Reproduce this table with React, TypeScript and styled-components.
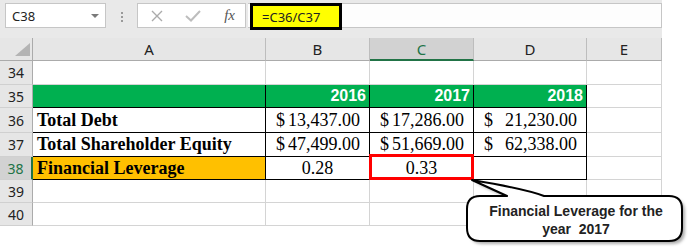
import { Fragment } from "react";
import styled, { createGlobalStyle } from "styled-components";

const GlobalStyle = createGlobalStyle`
  body {
    margin: 0;
    background: #ffffff;
  }
`;

const GRID = "#d4d4d4";
const INK = "#000000";
const EXCEL_GREEN = "#217346";

const Window = styled.div`
  position: relative;
  width: 662px;
  height: 251px;
  font-family: "Noto Sans", "Open Sans", sans-serif;
  color: #222;
`;

const Toolbar = styled.div`
  display: flex;
  align-items: flex-start;
  height: 38px;
  box-sizing: border-box;
  padding: 3px 0 0 5px;
  background: #e9e9e9;
`;

const NameBox = styled.div`
  display: flex;
  align-items: center;
  justify-content: space-between;
  width: 101px;
  height: 25px;
  box-sizing: border-box;
  padding: 0 6px 0 6px;
  background: #fff;
  border: 1px solid #c6c6c6;
  font-size: 13px;
`;

const DropArrow = styled.span`
  width: 0;
  height: 0;
  border-left: 4px solid transparent;
  border-right: 4px solid transparent;
  border-top: 4px solid #7a7a7a;
`;

const Grip = styled.div`
  display: flex;
  flex-direction: column;
  align-items: center;
  gap: 2px;
  width: 31px;
  padding-top: 9px;

  span {
    width: 2px;
    height: 2px;
    background: #9a9a9a;
  }
`;

const FxBox = styled.div`
  display: flex;
  align-items: center;
  width: 109px;
  height: 25px;
  box-sizing: border-box;
  padding: 0 10px 0 13px;
  gap: 22px;
  background: #fff;
  border: 1px solid #c6c6c6;
`;

const FxLabel = styled.span`
  margin-left: auto;
  font-family: "Liberation Serif", serif;
  font-style: italic;
  font-size: 15px;
  color: #555;
`;

const FormulaBar = styled.div`
  display: flex;
  align-items: flex-start;
  flex: 1;
  height: 25px;
  margin-left: 2px;
  box-sizing: border-box;
  background: #fdfdfd;
  border: 1px solid #c6c6c6;
  border-left: none;
`;

const FormulaHighlight = styled.div`
  display: flex;
  align-items: center;
  width: 92px;
  height: 27px;
  margin-top: -1px;
  margin-left: 2px;
  box-sizing: border-box;
  padding-left: 9px;
  background: #ffff00;
  border: 3px solid #000;
  font-size: 13px;
  color: #222;
`;

const Sheet = styled.div`
  display: grid;
  grid-template-columns: 33px 233px 104px 104px 113px 75px;
  grid-template-rows: 23px 24px 23px 25px 24px 23px 23px 23px;
`;

const Corner = styled.div`
  display: flex;
  align-items: flex-end;
  justify-content: flex-end;
  box-sizing: border-box;
  padding: 0 2px 4px 0;
  background: #e6e6e6;
  border-right: 1px solid #ababab;
  border-bottom: 1px solid #ababab;

  span {
    width: 0;
    height: 0;
    border-left: 15px solid transparent;
    border-bottom: 13px solid #b4b4b4;
  }
`;

const ColHead = styled.div<{ $active?: boolean }>`
  display: flex;
  align-items: center;
  justify-content: center;
  box-sizing: border-box;
  background: ${(p) => (p.$active ? "#d2d2d2" : "#e6e6e6")};
  color: ${(p) => (p.$active ? EXCEL_GREEN : "#222")};
  border-right: 1px solid #bdbdbd;
  border-bottom: ${(p) => (p.$active ? `2px solid ${EXCEL_GREEN}` : "1px solid #ababab")};
  font-size: 15px;
`;

const RowHead = styled.div<{ $active?: boolean }>`
  display: flex;
  align-items: center;
  justify-content: center;
  box-sizing: border-box;
  background: ${(p) => (p.$active ? "#d2d2d2" : "#e6e6e6")};
  color: ${(p) => (p.$active ? EXCEL_GREEN : "#222")};
  border-right: ${(p) => (p.$active ? `2px solid ${EXCEL_GREEN}` : "1px solid #ababab")};
  border-bottom: 1px solid #d0d0d0;
  font-size: 14px;
`;

const Cell = styled.div<{
  $fill?: string;
  $edge?: string;
  $base?: string;
  $align?: string;
  $selected?: boolean;
}>`
  position: ${(p) => (p.$selected ? "relative" : "static")};
  display: flex;
  align-items: center;
  justify-content: ${(p) => p.$align || "flex-start"};
  box-sizing: border-box;
  white-space: nowrap;
  background: ${(p) => p.$fill || "#fff"};
  border-right: 1px solid ${(p) => p.$edge || GRID};
  border-bottom: 1px solid ${(p) => p.$base || GRID};

  ${(p) =>
    p.$selected &&
    `
    &::after {
      content: "";
      position: absolute;
      top: -3px;
      left: -1px;
      right: -1px;
      bottom: -1px;
      border: 3px solid #ff0000;
    }
  `}
`;

const Label = styled.span`
  padding-left: 4px;
  font-family: "Liberation Serif", serif;
  font-weight: bold;
  font-size: 18px;
  color: #000;
`;

const Year = styled.span`
  padding-right: 3px;
  font-family: "Liberation Sans", sans-serif;
  font-weight: bold;
  font-size: 16px;
  color: #fff;
`;

const Money = styled.div`
  display: flex;
  justify-content: space-between;
  width: 100%;
  padding: 0 9px 0 10px;
  box-sizing: border-box;
  font-family: "Liberation Serif", serif;
  font-size: 18px;
  color: #000;
  white-space: pre;
`;

const Ratio = styled.span`
  font-family: "Liberation Serif", serif;
  font-size: 18px;
  color: #000;
`;

const Callout = styled.div`
  position: absolute;
  left: 464px;
  top: 176px;
  width: 224px;
  height: 72px;
`;

const CalloutText = styled.div`
  position: absolute;
  left: 3px;
  top: 21px;
  width: 218px;
  height: 45px;
  display: flex;
  align-items: center;
  justify-content: center;
  text-align: center;
  font-family: "Liberation Sans", sans-serif;
  font-weight: bold;
  font-size: 14px;
  line-height: 18px;
  color: #222;
  white-space: pre;
`;

const columns = ["A", "B", "C", "D", "E"];

const figures = [
  {
    row: 36,
    label: "Total Debt",
    values: ["13,437.00", "17,286.00", "  21,230.00"],
  },
  {
    row: 37,
    label: "Total Shareholder Equity",
    values: ["47,499.00", "51,669.00", "  62,338.00"],
  },
];

const calloutShape =
  "M8 4 L43 20 H16 Q3 20 3 33 V52 Q3 65 16 65 H205 Q218 65 218 52 V33 Q218 20 205 20 H80 Q62 13 8 4 Z";

const EmptyRow = ({ n }: { n: number }) => (
  <>
    <RowHead>{n}</RowHead>
    {columns.map((c) => (
      <Cell key={c} />
    ))}
  </>
);

export default function App() {
  return (
    <Window>
      <GlobalStyle />
      <Toolbar>
        <NameBox>
          C38
          <DropArrow />
        </NameBox>
        <Grip>
          <span />
          <span />
          <span />
        </Grip>
        <FxBox>
          <svg width="12" height="12" viewBox="0 0 12 12">
            <path d="M1 1 L11 11 M11 1 L1 11" stroke="#ababab" strokeWidth="1.4" fill="none" />
          </svg>
          <svg width="16" height="12" viewBox="0 0 16 12">
            <path d="M1 6 L6 10.5 L15 1" stroke="#bdbdbd" strokeWidth="2" fill="none" />
          </svg>
          <FxLabel>fx</FxLabel>
        </FxBox>
        <FormulaBar>
          <FormulaHighlight>=C36/C37</FormulaHighlight>
        </FormulaBar>
      </Toolbar>

      <Sheet>
        <Corner>
          <span />
        </Corner>
        {columns.map((c) => (
          <ColHead key={c} $active={c === "C"}>
            {c}
          </ColHead>
        ))}

        <EmptyRow n={34} />

        <RowHead>35</RowHead>
        <Cell $fill="#00b050" $edge={INK} $base={INK} />
        {["2016", "2017", "2018"].map((y) => (
          <Cell key={y} $fill="#00b050" $edge={INK} $base={INK} $align="flex-end">
            <Year>{y}</Year>
          </Cell>
        ))}
        <Cell />

        {figures.map((f) => (
          <Fragment key={f.row}>
            <RowHead>{f.row}</RowHead>
            <Cell $edge={INK} $base={INK}>
              <Label>{f.label}</Label>
            </Cell>
            {f.values.map((v, i) => (
              <Cell key={i} $edge={INK} $base={INK}>
                <Money>
                  <span>$</span>
                  <span>{v}</span>
                </Money>
              </Cell>
            ))}
            <Cell />
          </Fragment>
        ))}

        <RowHead $active>38</RowHead>
        <Cell $fill="#ffc000" $edge={INK} $base={INK}>
          <Label>Financial Leverage</Label>
        </Cell>
        <Cell $edge={INK} $base={INK} $align="center">
          <Ratio>0.28</Ratio>
        </Cell>
        <Cell $edge={INK} $base={INK} $align="center" $selected>
          <Ratio>0.33</Ratio>
        </Cell>
        <Cell $edge={INK} $base={INK} />
        <Cell />

        <EmptyRow n={39} />
        <EmptyRow n={40} />
      </Sheet>

      <Callout>
        <svg width="224" height="72" viewBox="0 0 224 72">
          <defs>
            <filter id="soft" x="-10%" y="-10%" width="130%" height="140%">
              <feGaussianBlur stdDeviation="1.6" />
            </filter>
          </defs>
          <path
            d={calloutShape}
            fill="#8c8c8c"
            transform="translate(3 3)"
            filter="url(#soft)"
            opacity="0.7"
          />
          <path
            d={calloutShape}
            fill="#ffffff"
            stroke="#000"
            strokeWidth="2"
            strokeLinejoin="round"
          />
        </svg>
        <CalloutText>{"Financial Leverage for the\nyear  2017"}</CalloutText>
      </Callout>
    </Window>
  );
}
